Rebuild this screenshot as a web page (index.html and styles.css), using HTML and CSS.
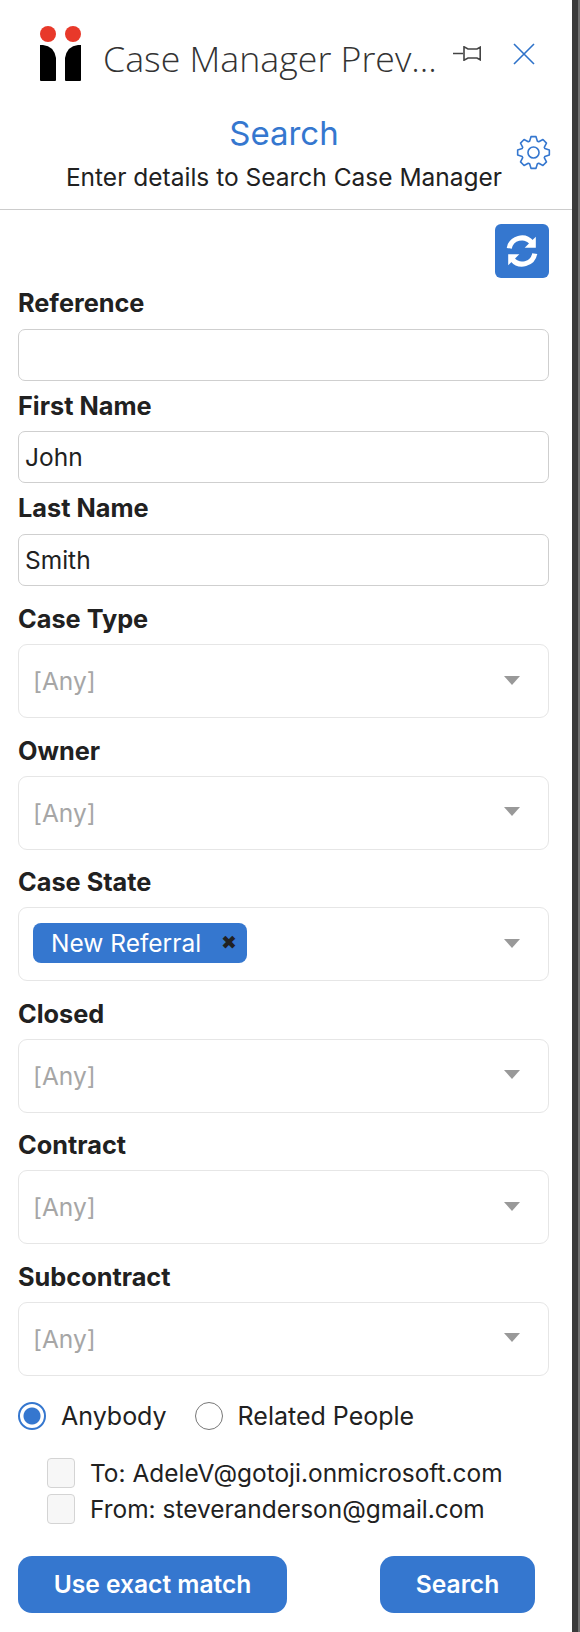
FILE: index.html
```html
<!DOCTYPE html>
<html lang="en">

<head>
  <meta charset="UTF-8" />
  <meta name="viewport" content="width=device-width, initial-scale=1.0" />
  <title>Case Manager Search</title>
  <link rel="stylesheet" href="styles.css">
</head>

<body>
  <div class="pane">
    <div class="task-header">
      <svg class="logo" viewBox="0 0 41 55">
        <circle cx="8" cy="8" r="8" fill="#e8392a" />
        <circle cx="33" cy="8" r="8" fill="#e8392a" />
        <path d="M0 19 H3 Q14 20 16 32 V54 Q16 55 15 55 H1 Q0 55 0 54 Z" fill="#000" />
        <path d="M41 19 H38 Q27 20 25 32 V54 Q25 55 26 55 H40 Q41 55 41 54 Z" fill="#000" />
      </svg>
      <span class="task-title">Case Manager Prev...</span>
      <svg class="pin" viewBox="0 0 28 15">
        <path d="M0 7.500 H10 M11 0.800 V14.200 L15 12 H24 L27.200 13.800 V1.200 L24 3 H15 Z" fill="none" stroke="#444" stroke-width="1.600" />
      </svg>
      <svg class="close" viewBox="0 0 24 24">
        <path d="M2 2 L22 22 M22 2 L2 22" fill="none" stroke="#2e72c9" stroke-width="1.600" />
      </svg>
    </div>

    <div class="heading">
      <div class="heading-text">
        <h1>Search</h1>
        <p>Enter details to Search Case Manager</p>
      </div>
      <svg class="gear" viewBox="0 0 24 24" fill="none" stroke="#3577cf" stroke-width="1.100" stroke-linejoin="round">
        <circle cx="12" cy="12" r="3.800" />
        <path d="M9.330 4.250 L10.280 1.140 H13.720 L14.670 4.250 A8.200 8.200 0 0 1 15.590 4.630 L18.470 3.100 L20.900 5.530 L19.370 8.410 A8.200 8.200 0 0 1 19.750 9.330 L22.860 10.280 V13.720 L19.750 14.670 A8.200 8.200 0 0 1 19.370 15.590 L20.900 18.470 L18.470 20.900 L15.590 19.370 A8.200 8.200 0 0 1 14.670 19.750 L13.720 22.860 H10.280 L9.330 19.750 A8.200 8.200 0 0 1 8.410 19.370 L5.530 20.900 L3.100 18.470 L4.630 15.590 A8.200 8.200 0 0 1 4.250 14.670 L1.140 13.720 V10.280 L4.250 9.330 A8.200 8.200 0 0 1 4.630 8.410 L3.100 5.530 L5.530 3.100 L8.410 4.630 A8.200 8.200 0 0 1 9.330 4.250 Z" />
      </svg>
    </div>

    <form class="search-form">
      <div class="refresh-row">
        <button type="button" class="refresh-btn">
          <svg viewBox="0 0 32 32" fill="none" stroke="#fff" stroke-width="4.800">
            <path d="M4 13.500 A12 12 0 0 1 25 8" />
            <path d="M28 18.500 A12 12 0 0 1 7 24" />
            <path d="M29 2.500 V13 H18.500 Z" fill="#fff" stroke="none" />
            <path d="M3 29.500 V19 H13.500 Z" fill="#fff" stroke="none" />
          </svg>
        </button>
      </div>

      <div class="text-field">
        <label>Reference</label>
        <input type="text" value="" />
      </div>
      <div class="text-field">
        <label>First Name</label>
        <input type="text" value="John" />
      </div>
      <div class="text-field">
        <label>Last Name</label>
        <input type="text" value="Smith" />
      </div>

      <div class="select-field first">
        <label>Case Type</label>
        <div class="select-box"><span class="placeholder">[Any]</span><span class="arrow"></span></div>
      </div>
      <div class="select-field">
        <label>Owner</label>
        <div class="select-box"><span class="placeholder">[Any]</span><span class="arrow"></span></div>
      </div>
      <div class="select-field">
        <label>Case State</label>
        <div class="select-box">
          <span class="tag">New Referral<span class="tag-x">&#10006;</span></span>
          <span class="arrow"></span>
        </div>
      </div>
      <div class="select-field">
        <label>Closed</label>
        <div class="select-box"><span class="placeholder">[Any]</span><span class="arrow"></span></div>
      </div>
      <div class="select-field">
        <label>Contract</label>
        <div class="select-box"><span class="placeholder">[Any]</span><span class="arrow"></span></div>
      </div>
      <div class="select-field">
        <label>Subcontract</label>
        <div class="select-box"><span class="placeholder">[Any]</span><span class="arrow"></span></div>
      </div>

      <div class="radio-row">
        <span class="radio checked"></span>
        <span class="radio-label">Anybody</span>
        <span class="radio"></span>
        <span class="radio-label">Related People</span>
      </div>

      <div class="check-list">
        <div class="check-row"><span class="check"></span><span>To: AdeleV@gotoji.onmicrosoft.com</span></div>
        <div class="check-row"><span class="check"></span><span>From: steveranderson@gmail.com</span></div>
      </div>

      <div class="actions">
        <button type="button" class="btn btn-exact">Use exact match</button>
        <button type="button" class="btn btn-search">Search</button>
      </div>
    </form>
  </div>
</body>

</html>
```
FILE: styles.css
```css
html,
body {
  margin: 0;
  padding: 0;
}

body {
  font-family: Inter, 'Liberation Sans', sans-serif;
  background-color: #ffffff;
  color: #212121;
  width: 580px;
  height: 1632px;
  overflow: hidden;
}

.pane {
  width: 572px;
  height: 1632px;
  box-sizing: border-box;
  /* dark window edge on the right */
  box-shadow: 6px 0 0 #3a3a3a, 8px 0 0 #707070;
}

/* Office task pane title bar */
.task-header {
  display: flex;
  align-items: center;
  height: 90px;
  padding: 17px 36px 0 40px;
  box-sizing: border-box;
}

.logo {
  width: 41px;
  height: 55px;
  flex-shrink: 0;
}

.task-title {
  font-family: 'Open Sans', sans-serif;
  font-weight: 300;
  font-size: 35.700px;
  color: #333333;
  margin-left: 22px;
  margin-top: 8px;
  white-space: nowrap;
  flex-grow: 1;
}

.pin {
  width: 28px;
  height: 15px;
}

.close {
  width: 24px;
  height: 24px;
  margin-left: 31px;
}

.heading {
  position: relative;
  height: 120px;
  box-sizing: border-box;
  border-bottom: 1px solid #cccccc;
}

.heading-text {
  width: 568px;
  text-align: center;
}

.heading h1 {
  font-size: 33px;
  font-weight: 400;
  color: #3577cf;
  margin: 0;
  padding-top: 21px;
  line-height: 44px;
}

.heading p {
  font-size: 24.500px;
  margin: 0;
  line-height: 36px;
  padding-top: 4px;
}

.gear {
  position: absolute;
  top: 45px;
  right: 21px;
  width: 35px;
  height: 35px;
}

.search-form {
  padding: 14px 23px 0 18px;
}

.refresh-row {
  display: flex;
  justify-content: flex-end;
}

.refresh-btn {
  width: 54px;
  height: 54px;
  padding: 0;
  border: none;
  border-radius: 6px;
  background-color: #3577cf;
  display: flex;
  align-items: center;
  justify-content: center;
}

.refresh-btn svg {
  width: 34px;
  height: 34px;
}

label {
  display: block;
  font-size: 25.300px;
  font-weight: 700;
  line-height: 34px;
  color: #212121;
}

.text-field {
  margin-top: 8px;
}

.text-field input {
  display: block;
  width: 100%;
  height: 52px;
  box-sizing: border-box;
  border: 1px solid #cfcfcf;
  border-radius: 7px;
  outline: none;
  padding: 0 6px;
  margin-top: 8.500px;
  font-family: inherit;
  font-size: 24.500px;
  color: #212121;
}

.select-field {
  margin-top: 15.600px;
}

.select-field.first {
  margin-top: 16.500px;
}

.select-box {
  display: flex;
  align-items: center;
  justify-content: space-between;
  height: 74px;
  box-sizing: border-box;
  border: 1px solid #e6e6e6;
  border-radius: 9px;
  margin-top: 8px;
  padding: 0 28px 0 14px;
}

.placeholder {
  font-size: 24.500px;
  color: #a6a6a6;
}

.arrow {
  width: 0;
  height: 0;
  border-left: 8px solid transparent;
  border-right: 8px solid transparent;
  border-top: 9px solid #999999;
  margin-top: -2px;
}

.tag {
  display: flex;
  align-items: center;
  height: 40px;
  margin-top: -3px;
  background-color: #3577cf;
  color: #ffffff;
  font-size: 24.500px;
  border-radius: 8px;
  padding: 0 10px 0 18px;
}

.tag-x {
  color: #212121;
  font-size: 19px;
  margin-left: 20px;
}

.radio-row {
  display: flex;
  align-items: center;
  margin-top: 25px;
  font-size: 25px;
}

.radio {
  width: 28px;
  height: 28px;
  box-sizing: border-box;
  border: 1.500px solid #777777;
  border-radius: 50%;
  flex-shrink: 0;
}

.radio.checked {
  border: 2px solid #3577cf;
  background: radial-gradient(circle, #3577cf 0 8px, #ffffff 9px);
}

.radio-label {
  margin-left: 15px;
  margin-right: 28px;
}

.check-list {
  margin-top: 27px;
  padding-left: 29px;
  display: flex;
  flex-direction: column;
  gap: 6px;
  font-size: 24.450px;
}

.check-row {
  display: flex;
  align-items: center;
  gap: 15px;
}

.check {
  width: 28px;
  height: 30px;
  box-sizing: border-box;
  border: 1.500px solid #d4d4d4;
  border-radius: 4px;
  background-color: #f7f7f7;
  flex-shrink: 0;
}

.actions {
  display: flex;
  justify-content: space-between;
  margin-top: 32px;
  padding-right: 14px;
}

.btn {
  height: 57px;
  border: none;
  border-radius: 14px;
  background-color: #3577cf;
  color: #ffffff;
  font-family: inherit;
  font-size: 24.600px;
  font-weight: 600;
}

.btn-exact {
  width: 269px;
}

.btn-search {
  width: 155px;
}
```
